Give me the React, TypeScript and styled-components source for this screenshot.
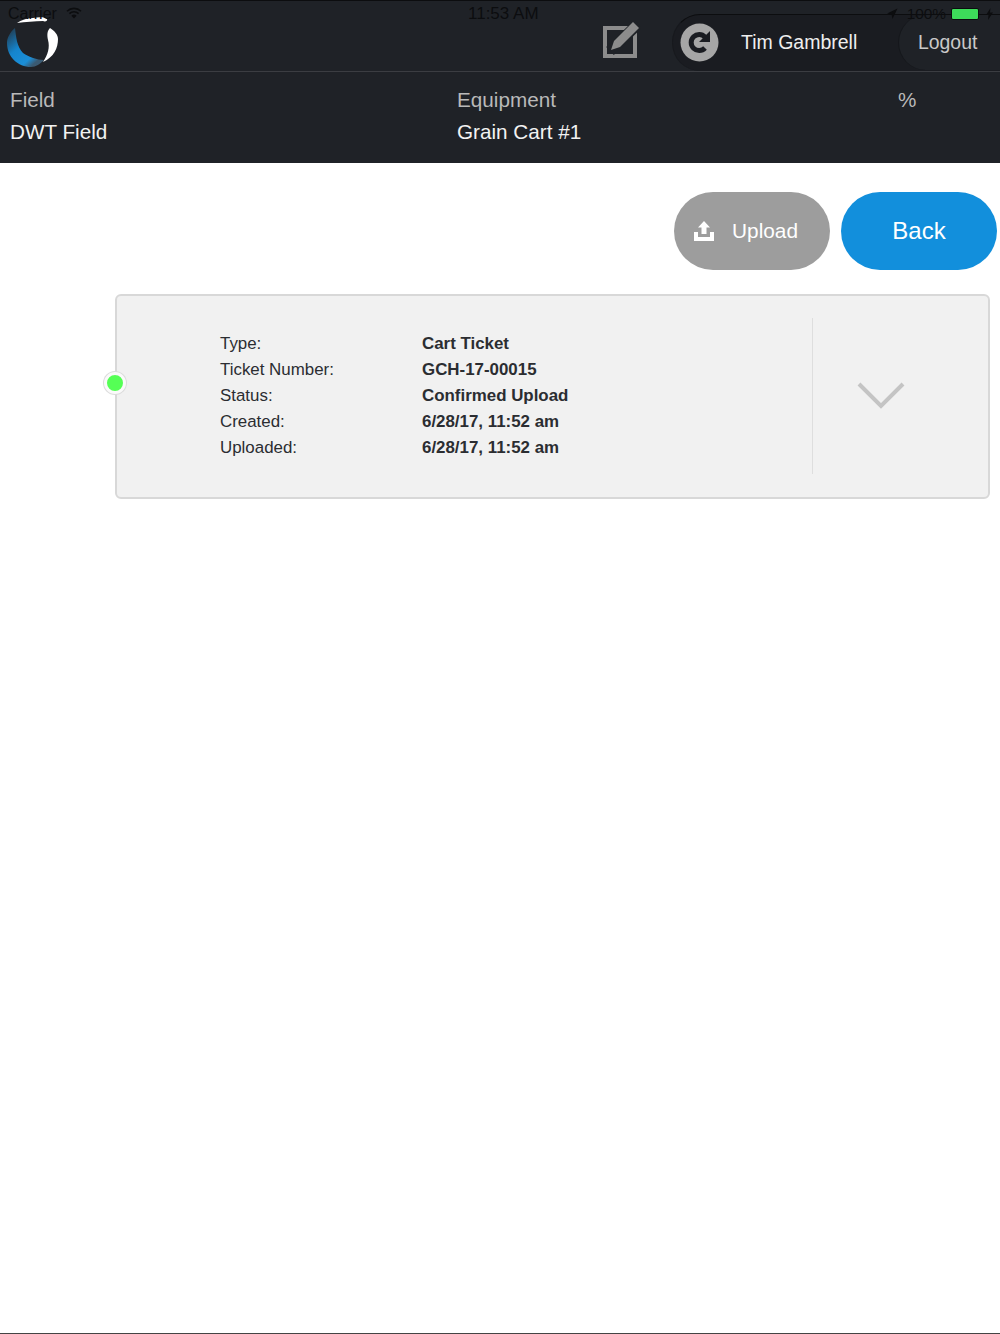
import React from 'react'
import styled, { createGlobalStyle } from 'styled-components'

const GlobalStyle = createGlobalStyle`
  html, body {
    margin: 0;
    padding: 0;
    background: #fff;
    font-family: "Liberation Sans", Arial, sans-serif;
  }
`

const Page = styled.div`
  position: relative;
  width: 1000px;
  height: 1334px;
  overflow: hidden;
  border-bottom: 1px solid #444;
  box-sizing: border-box;
`

const StatusBar = styled.div`
  position: absolute;
  top: 0;
  left: 0;
  right: 0;
  height: 28px;
  z-index: 3;
  color: #0c0d0f;
  font-size: 16px;
  line-height: 28px;
`

const Carrier = styled.span`
  position: absolute;
  left: 8px;
  top: 0;
`

const WifiIcon = styled.svg`
  position: absolute;
  left: 66px;
  top: 7px;
`

const Clock = styled.span`
  position: absolute;
  left: 468px;
  top: 0;
  font-size: 17px;
`

const Battery = styled.div`
  position: absolute;
  right: 0;
  top: 0;
  height: 28px;
  display: flex;
  align-items: center;
  padding-right: 7px;
  font-size: 15.4px;
`

const Percent = styled.span`
  margin: 0 5px 0 9px;
`

const BatteryBody = styled.span`
  display: block;
  width: 26px;
  height: 10px;
  background: #3ddc5a;
  border: 1px solid #0c0d0f;
  border-radius: 2px;
  margin-right: 7px;
`

const Header = styled.header`
  background: #1f2227;
  border-top: 1px solid #0c0d0f;
`

const TopBar = styled.div`
  display: flex;
  align-items: flex-end;
  height: 70px;
  border-bottom: 1px solid #3b3d42;
`

const LogoMark = styled.svg`
  flex: none;
  margin: 0 0 4px 7px;
`

const EditIcon = styled.svg`
  flex: none;
  margin: 0 31px 13px auto;
`

const UserPill = styled.div`
  width: 328px;
  height: 57px;
  display: flex;
  align-items: center;
  background: #1a1c21;
  border-top: 1px solid #0c0d0f;
  border-left: 1px solid #17191d;
  border-radius: 28px 0 0 28px;
  box-sizing: border-box;
  padding: 0 0 2px 7px;
`

const UserName = styled.span`
  margin-left: 22px;
  color: #eee;
  font-size: 19.5px;
  width: 157px;
  flex: none;
`

const LogoutPill = styled.div`
  flex: 1;
  height: 55px;
  display: flex;
  align-items: center;
  padding-left: 19px;
  background: #1f2227;
  border-left: 1px solid #15171b;
  border-radius: 28px 0 0 28px;
  color: #c9c9c9;
  font-size: 19.4px;
`

const InfoGrid = styled.div`
  display: grid;
  grid-template-columns: 457px 441px 1fr;
  grid-auto-rows: 32px;
  height: 91px;
  padding-top: 12px;
  box-sizing: border-box;
  align-items: center;
`

const InfoCell = styled.div<{ $muted?: boolean; $first?: boolean }>`
  padding-left: ${(p) => (p.$first ? '10px' : '0')};
  color: ${(p) => (p.$muted ? '#b9b9b9' : '#f2f2f2')};
  font-size: 20.7px;
`

const Actions = styled.div`
  display: flex;
  justify-content: flex-end;
  gap: 11px;
  padding: 29px 3px 0 0;
`

const PillButton = styled.button<{ $variant: 'grey' | 'blue' }>`
  width: 156px;
  height: 78px;
  border: 0;
  border-radius: 39px;
  display: flex;
  align-items: center;
  justify-content: center;
  gap: 17px;
  padding: 0 ${(p) => (p.$variant === 'blue' ? '0' : '13px')} 0 0;
  font-family: inherit;
  color: #fff;
  font-size: ${(p) => (p.$variant === 'blue' ? '24px' : '20.8px')};
  background: ${(p) => (p.$variant === 'blue' ? '#128fdc' : '#9d9d9d')};
`

const Card = styled.section`
  position: relative;
  display: flex;
  align-items: center;
  height: 205px;
  margin: 24px 10px 0 115px;
  background: #f1f1f1;
  border: 2px solid #d8d8d8;
  border-radius: 6px;
  box-sizing: border-box;
`

const StatusDot = styled.span`
  position: absolute;
  left: -13px;
  top: 76px;
  width: 16px;
  height: 16px;
  background: #55ff55;
  border: 3px solid #fafafa;
  box-shadow: 0 0 0 1px #dcdcdc;
  border-radius: 50%;
`

const Details = styled.dl`
  flex: 1;
  display: grid;
  grid-template-columns: 202px 1fr;
  grid-auto-rows: 26px;
  align-items: center;
  margin: 0 0 2px;
  padding-left: 103px;
  font-size: 16.9px;
  color: #2b2d31;
`

const Term = styled.dt`
  margin: 0;
`

const Value = styled.dd`
  margin: 0;
  font-weight: bold;
`

const Expand = styled.div`
  width: 176px;
  height: 156px;
  margin-bottom: 2px;
  padding-right: 39px;
  display: flex;
  align-items: center;
  justify-content: center;
  border-left: 1px solid #dedede;
  flex: none;
  box-sizing: border-box;
`

const rows = [
  ['Type:', 'Cart Ticket'],
  ['Ticket Number:', 'GCH-17-00015'],
  ['Status:', 'Confirmed Upload'],
  ['Created:', '6/28/17, 11:52 am'],
  ['Uploaded:', '6/28/17, 11:52 am'],
]

const Logo = () => (
  <LogoMark width="54" height="54" viewBox="0 0 54 54">
    <defs>
      <linearGradient id="crescent" x1="0" y1="0" x2="0.75" y2="0.9">
        <stop offset="0" stopColor="#23303c" />
        <stop offset="0.5" stopColor="#1585cd" />
        <stop offset="0.85" stopColor="#1b8fd8" />
        <stop offset="1" stopColor="#3a5a72" />
      </linearGradient>
    </defs>
    <path
      d="M8 15C3 19 0 25 0 30c0 14 11 24 24 24 5 0 9-3 13-7-7 0-15-3-21-7C10 34 9 24 8 15z"
      fill="url(#crescent)"
    />
    <path d="M10 10c4-3 10-5 16-5 6-1 12-1 14 1 1 2-2 3-4 2-8 0-18 1-26 2z" fill="#fff" />
    <path d="M43 15c5 3 8 7 8 11 0 9-4 18-15 23 5-7 7-15 5-22-1-5-1-9 2-12z" fill="#fff" />
  </LogoMark>
)

const Edit = () => (
  <EditIcon width="38" height="38" viewBox="0 0 38 38">
    <rect x="2" y="8" width="30" height="28" fill="none" stroke="#8c8c8c" strokeWidth="4" />
    <path d="M7 31 35 4" stroke="#1f2227" strokeWidth="11" />
    <path d="M8 30l3-9L30 2l6 6-19 19z" fill="#8c8c8c" />
  </EditIcon>
)

const Refresh = () => (
  <svg width="39" height="39" viewBox="0 0 39 39" style={{ flex: 'none' }}>
    <circle cx="19.5" cy="19.5" r="19" fill="#a6a6a6" />
    <path d="M25 25a8 8 0 1 1 0-11" fill="none" stroke="#1a1c21" strokeWidth="5" />
    <path d="M30 8v11H19z" fill="#1a1c21" />
  </svg>
)

export default function App() {
  return (
    <Page>
      <GlobalStyle />
      <StatusBar>
        <Carrier>Carrier</Carrier>
        <WifiIcon width="16" height="12" viewBox="0 0 16 12">
          <path
            d="M1 4.200a10 10 0 0 1 14 0M3.400 6.600a6.600 6.600 0 0 1 9.200 0"
            fill="none"
            stroke="#0c0d0f"
            strokeWidth="1.6"
          />
          <path d="M8 11.500 5.400 8.800a3.700 3.700 0 0 1 5.200 0z" fill="#0c0d0f" />
        </WifiIcon>
        <Clock>11:53 AM</Clock>
        <Battery>
          <svg width="12" height="12" viewBox="0 0 12 12">
            <path d="M11.500.5 1 5.500l4.600.9.9 4.600z" fill="#0c0d0f" />
          </svg>
          <Percent>100%</Percent>
          <BatteryBody />
          <svg width="7" height="12" viewBox="0 0 7 12">
            <path d="M4.500 0 0 7h2.500L2 12l5-7.500H4z" fill="#0c0d0f" />
          </svg>
        </Battery>
      </StatusBar>

      <Header>
        <TopBar>
          <Logo />
          <Edit />
          <UserPill>
            <Refresh />
            <UserName>Tim Gambrell</UserName>
            <LogoutPill>Logout</LogoutPill>
          </UserPill>
        </TopBar>
        <InfoGrid>
          <InfoCell $muted $first>Field</InfoCell>
          <InfoCell $muted>Equipment</InfoCell>
          <InfoCell $muted>%</InfoCell>
          <InfoCell $first>DWT Field</InfoCell>
          <InfoCell>Grain Cart #1</InfoCell>
          <InfoCell />
        </InfoGrid>
      </Header>

      <Actions>
        <PillButton $variant="grey">
          <svg width="22" height="20" viewBox="0 0 22 20">
            <path d="M11 0l6 6.500h-3.500V13h-5V6.500H5z" fill="#fff" />
            <path d="M1 11h4v5h12v-5h4v9H1z" fill="#fff" />
          </svg>
          Upload
        </PillButton>
        <PillButton $variant="blue">Back</PillButton>
      </Actions>

      <Card>
        <StatusDot />
        <Details>
          {rows.map(([term, value]) => (
            <React.Fragment key={term}>
              <Term>{term}</Term>
              <Value>{value}</Value>
            </React.Fragment>
          ))}
        </Details>
        <Expand>
          <svg width="48" height="30" viewBox="0 0 48 30">
            <path d="M2 3l22 22L46 3" fill="none" stroke="#c4c4c4" strokeWidth="4" />
          </svg>
        </Expand>
      </Card>
    </Page>
  )
}
